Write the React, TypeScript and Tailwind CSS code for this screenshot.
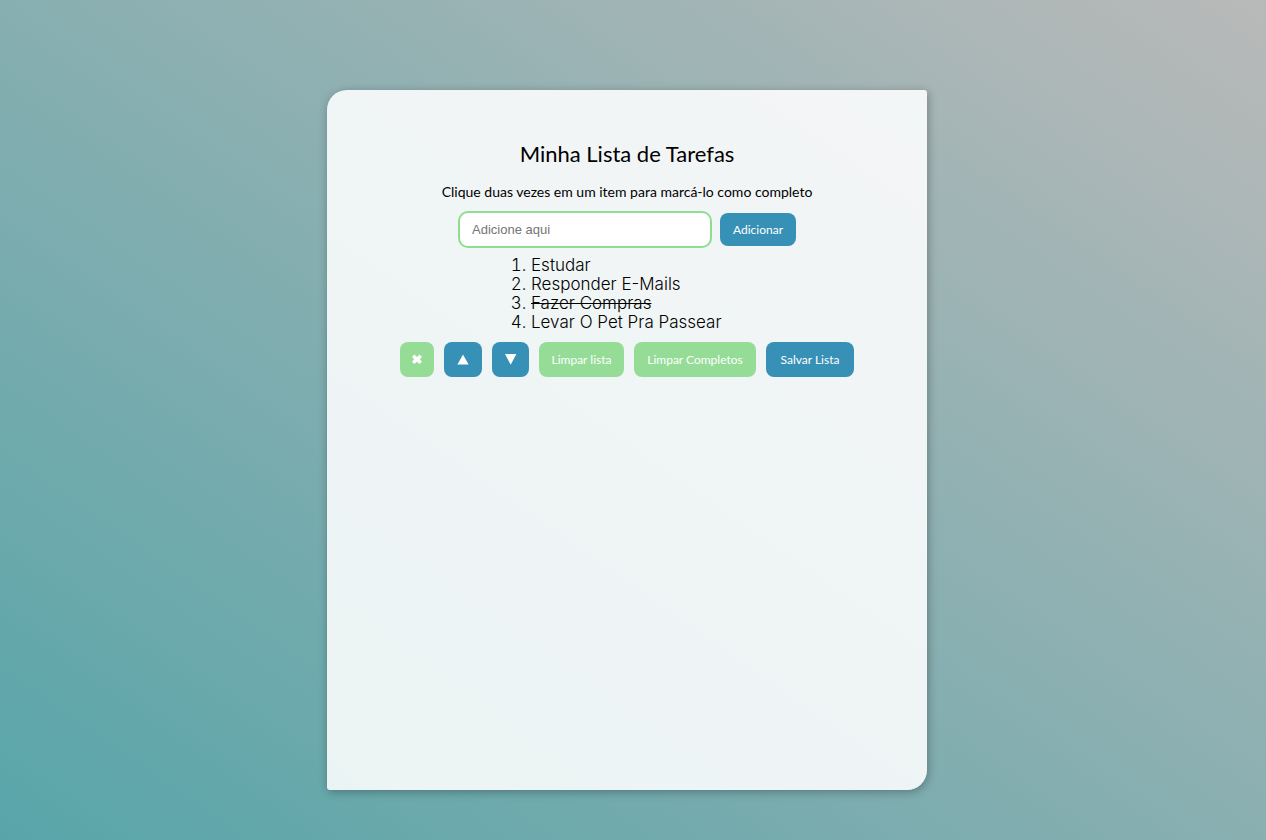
import { useState } from "react";

const initialTasks = [
  { text: "Estudar", done: false },
  { text: "Responder E-Mails", done: false },
  { text: "Fazer Compras", done: true },
  { text: "Levar O Pet Pra Passear", done: false },
];

export default function App() {
  const [value, setValue] = useState("");
  const [tasks, setTasks] = useState(initialTasks);

  const add = () => {
    if (!value.trim()) return;
    setTasks([...tasks, { text: value, done: false }]);
    setValue("");
  };
  const toggle = (index: number) =>
    setTasks(tasks.map((t, i) => (i === index ? { ...t, done: !t.done } : t)));

  return (
    <div className="min-h-screen bg-linear-[35deg] from-[#58a5a9] to-[#b9b9b9] pt-[90px] pr-3 pb-[50px] font-['Lato','Liberation_Sans',sans-serif] text-black">
      <main className="mx-auto flex min-h-[700px] w-full max-w-[600px] flex-col items-center rounded-[3px] rounded-tl-[20px] rounded-br-[20px] bg-white/87 pt-[50px] shadow-[1px_2px_10px_rgba(0,0,0,0.3)]">
        <h1 className="text-[22px] leading-7">Minha Lista de Tarefas</h1>
        <p className="mt-3 text-[14px] leading-6">Clique duas vezes em um item para marcá-lo como completo</p>
        <div className="mt-[7px] flex items-center gap-2">
          <input
            aria-label="Nova tarefa"
            placeholder="Adicione aqui"
            value={value}
            onChange={(e) => setValue(e.target.value)}
            className="h-[37px] w-[254px] rounded-[10px] border-2 border-[#8fdc93] bg-white px-3 font-['Liberation_Sans',sans-serif] text-[13px] outline-none placeholder:text-[#757575]"
          />
          <button onClick={add} className="h-[33px] w-[76px] rounded-[8px] bg-[#3790b6] text-[12px] text-white">
            Adicionar
          </button>
        </div>
        <ol className="mt-2 w-[192px] list-decimal font-['Inter','Liberation_Sans',sans-serif] text-[17px] leading-[19px] font-light">
          {tasks.map((task, i) => (
            <li key={i} onDoubleClick={() => toggle(i)} className="whitespace-nowrap">
              <span className={task.done ? "line-through" : ""}>{task.text}</span>
            </li>
          ))}
        </ol>
        <div className="mt-[10px] flex gap-[10px] text-[12px] text-white">
          <button aria-label="Remover item" className="flex h-[35px] w-[34px] items-center justify-center rounded-[8px] bg-[#95dc97]">
            <svg viewBox="0 0 12 12" className="size-3" fill="currentColor">
              <path d="M3.4 .6L6 3 8.6 .6 11 2.9 8.8 5.3 11 7.8 8.6 10.1 6 7.7 3.4 10.1 1 7.8 3.2 5.3 1 2.9z" />
            </svg>
          </button>
          <button aria-label="Mover para cima" className="flex h-[35px] w-[38px] items-center justify-center rounded-[8px] bg-[#3790b6]">
            <svg viewBox="0 0 12 12" className="size-3" fill="currentColor">
              <path d="M6 .5l5.6 10H.4z" />
            </svg>
          </button>
          <button aria-label="Mover para baixo" className="flex h-[35px] w-[37px] items-center justify-center rounded-[8px] bg-[#3790b6]">
            <svg viewBox="0 0 12 12" className="size-3" fill="currentColor">
              <path d="M0 0h11.4L5.7 10.8z" />
            </svg>
          </button>
          <button onClick={() => setTasks([])} className="h-[35px] w-[85px] rounded-[8px] bg-[#95dc97]">
            Limpar lista
          </button>
          <button onClick={() => setTasks(tasks.filter((t) => !t.done))} className="h-[35px] w-[122px] rounded-[8px] bg-[#95dc97]">
            Limpar Completos
          </button>
          <button className="h-[35px] w-[88px] rounded-[8px] bg-[#3790b6]">Salvar Lista</button>
        </div>
      </main>
    </div>
  );
}
